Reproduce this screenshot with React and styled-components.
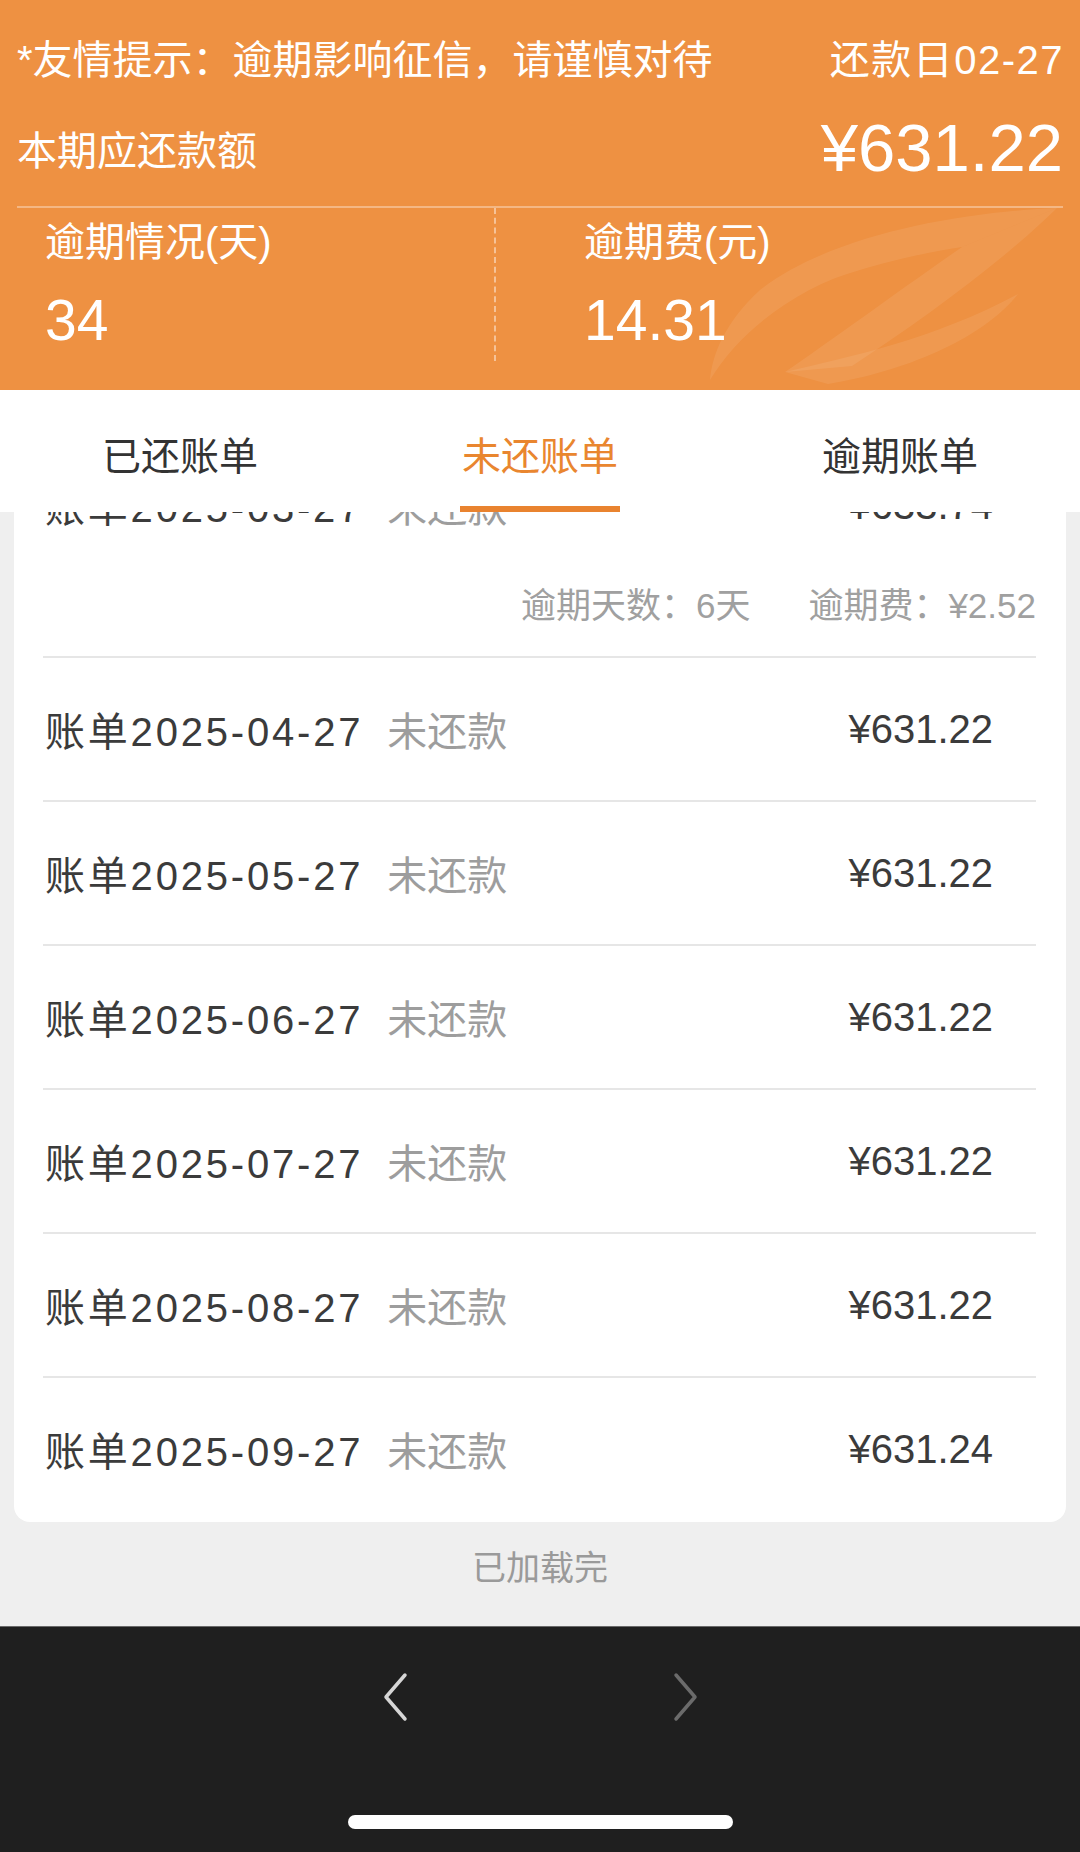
import React from 'react';
import styled, { createGlobalStyle } from 'styled-components';

const GlobalStyle = createGlobalStyle`
  body {
    margin: 0;
    background: #efefef;
    font-family: "Liberation Sans", "Noto Sans CJK SC", sans-serif;
  }
  * { box-sizing: border-box; }
`;

const bills = [
  { date: '2025-04-27', amount: '¥631.22' },
  { date: '2025-05-27', amount: '¥631.22' },
  { date: '2025-06-27', amount: '¥631.22' },
  { date: '2025-07-27', amount: '¥631.22' },
  { date: '2025-08-27', amount: '¥631.22' },
  { date: '2025-09-27', amount: '¥631.24' },
];

const BillPage = () => {
  return (
    <Page>
      <GlobalStyle />
      <Header>
        <Watermark viewBox="0 0 480 200">
          <path d="M457,18 C360,22 230,45 160,100 C125,132 112,165 110,190 C140,140 200,96 260,80 C300,68 340,60 362,57 Z" />
          <path d="M457,18 L362,57 C300,100 232,150 185,182 L252,176 C322,130 402,72 457,18 Z" />
          <path d="M185,182 C252,166 332,150 418,104 C382,150 302,182 228,194 Z" />
        </Watermark>
        <HintRow>
          <span>*友情提示：逾期影响征信，请谨慎对待</span>
          <DueDate>还款日02-27</DueDate>
        </HintRow>
        <AmountRow>
          <span>本期应还款额</span>
          <BigAmount>¥631.22</BigAmount>
        </AmountRow>
        <Stats>
          <StatCell $divider>
            <StatLabel>逾期情况(天)</StatLabel>
            <StatValue>34</StatValue>
          </StatCell>
          <StatCell $right>
            <StatLabel>逾期费(元)</StatLabel>
            <StatValue>14.31</StatValue>
          </StatCell>
        </Stats>
      </Header>

      <Tabs>
        <Tab>已还账单</Tab>
        <Tab $active>未还账单</Tab>
        <Tab>逾期账单</Tab>
      </Tabs>

      <Content>
        <Card>
          <Row $first>
            <MainLine>
              <BillName>账单2025-03-27</BillName>
              <Status>未还款</Status>
              <Amount>¥633.74</Amount>
            </MainLine>
            <DetailLine>
              <span>逾期天数：6天</span>
              <span>逾期费：¥2.52</span>
            </DetailLine>
          </Row>
          {bills.map((bill, index) => (
            <Row key={bill.date} $last={index === bills.length - 1}>
              <MainLine>
                <BillName>账单{bill.date}</BillName>
                <Status>未还款</Status>
                <Amount>{bill.amount}</Amount>
              </MainLine>
            </Row>
          ))}
        </Card>
        <Loaded>已加载完</Loaded>
      </Content>

      <BottomBar>
        <NavRow>
          <Chevron viewBox="0 0 28 50" $color="#d6d6d6">
            <polyline points="24,3 5,25 24,47" />
          </Chevron>
          <Chevron viewBox="0 0 28 50" $color="#6b6b6b">
            <polyline points="4,3 23,25 4,47" />
          </Chevron>
        </NavRow>
        <HomeIndicator />
      </BottomBar>
    </Page>
  );
};

const Page = styled.div`
  display: flex;
  flex-direction: column;
  width: 1080px;
  height: 1852px;
  overflow: hidden;
`;

const Header = styled.div`
  position: relative;
  height: 390px;
  padding: 0 17px;
  background: #ee9142;
  color: #fff;
  overflow: hidden;
`;

const Watermark = styled.svg`
  position: absolute;
  right: 0;
  bottom: 0;
  width: 480px;
  height: 200px;
  fill: rgba(255, 255, 255, 0.08);
  pointer-events: none;
`;

const HintRow = styled.div`
  display: flex;
  justify-content: space-between;
  align-items: center;
  padding-top: 36px;
  height: 84px;
  font-size: 40px;
  line-height: 48px;
`;

const DueDate = styled.span`
  letter-spacing: 1.5px;
  margin-right: -1px;
`;

const AmountRow = styled.div`
  display: flex;
  justify-content: space-between;
  align-items: center;
  height: 122px;
  padding-top: 6px;
  font-size: 40px;
`;

const BigAmount = styled.span`
  font-size: 67px;
  line-height: 80px;
`;

const Stats = styled.div`
  display: grid;
  grid-template-columns: 479px 1fr;
  border-top: 2px solid rgba(255, 255, 255, 0.35);
`;

const StatCell = styled.div`
  padding: 12px 0 11px ${p => (p.$right ? '88px' : '28px')};
  border-right: ${p => (p.$divider ? '2px dashed rgba(255,255,255,0.45)' : 'none')};
`;

const StatLabel = styled.div`
  font-size: 40px;
  line-height: 44px;
`;

const StatValue = styled.div`
  margin-top: 26px;
  font-size: 57px;
  line-height: 60px;
`;

const Tabs = styled.div`
  display: grid;
  grid-template-columns: repeat(3, 1fr);
  height: 122px;
  background: #fff;
  position: relative;
  z-index: 1;
`;

const Tab = styled.div`
  position: relative;
  display: flex;
  align-items: center;
  justify-content: center;
  padding-top: 4px;
  font-size: 39px;
  color: ${p => (p.$active ? '#e9862f' : '#333')};

  &::after {
    content: '';
    display: ${p => (p.$active ? 'block' : 'none')};
    position: absolute;
    bottom: 0;
    left: 50%;
    width: 160px;
    height: 6px;
    margin-left: -80px;
    background: #e9832f;
  }
`;

const Content = styled.div`
  flex: 1;
  display: flex;
  flex-direction: column;
  background: #efefef;
`;

const Card = styled.div`
  margin: 0 14px;
  background: #fff;
  border-radius: 0 0 16px 16px;
  overflow: hidden;
`;

const Row = styled.div`
  margin: ${p => (p.$first ? '-78px' : '0')} 30px 0 29px;
  padding-bottom: ${p => (p.$first ? '28px' : '0')};
  border-bottom: 2px solid ${p => (p.$last ? 'transparent' : '#e6e6e6')};
`;

const MainLine = styled.div`
  display: flex;
  align-items: center;
  height: 142px;
  padding: 0 43px 0 2px;
  font-size: 40px;
  color: #3b3b3b;
`;

const BillName = styled.span`
  letter-spacing: 2.8px;
`;

const Status = styled.span`
  margin-left: 24px;
  color: #9d9d9d;
`;

const Amount = styled.span`
  margin-left: auto;
`;

const DetailLine = styled.div`
  display: flex;
  justify-content: flex-end;
  gap: 58px;
  margin-top: 8px;
  height: 44px;
  line-height: 44px;
  font-size: 35px;
  color: #a0a0a0;
`;

const Loaded = styled.div`
  padding-top: 23px;
  text-align: center;
  font-size: 34px;
  line-height: 46px;
  color: #9a9a9a;
`;

const BottomBar = styled.div`
  height: 226px;
  background: #1f1f1f;
  border-top: 1px solid #6a6a6a;
  display: flex;
  flex-direction: column;
  align-items: center;
`;

const NavRow = styled.div`
  display: flex;
  align-items: center;
  justify-content: center;
  gap: 263px;
  height: 140px;
`;

const Chevron = styled.svg`
  width: 28px;
  height: 50px;
  fill: none;
  stroke: ${p => p.$color};
  stroke-width: 3.5;
  stroke-linecap: round;
  stroke-linejoin: round;
`;

const HomeIndicator = styled.div`
  margin-top: 48px;
  width: 385px;
  height: 14px;
  border-radius: 7px;
  background: #fff;
`;

export default BillPage;
